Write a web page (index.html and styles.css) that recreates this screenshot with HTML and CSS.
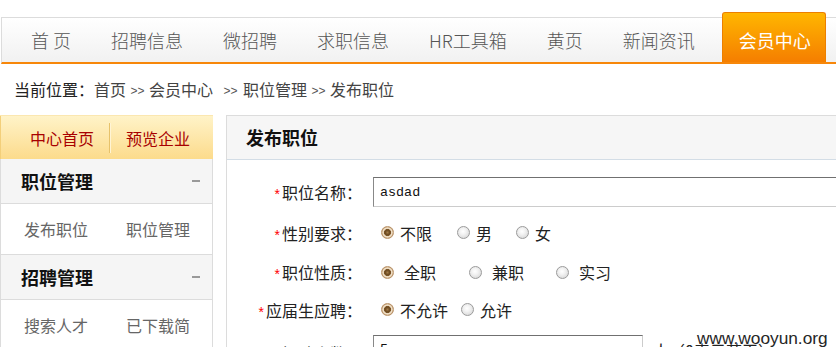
FILE: index.html
```html
<!DOCTYPE html>
<html lang="zh-CN">
<head>
<meta charset="utf-8">
<title>发布职位 - 会员中心</title>
<link rel="stylesheet" href="styles.css">
</head>
<body>
<nav class="nav">
  <a class="nav-item">首 页</a>
  <a class="nav-item">招聘信息</a>
  <a class="nav-item">微招聘</a>
  <a class="nav-item">求职信息</a>
  <a class="nav-item">HR工具箱</a>
  <a class="nav-item">黄页</a>
  <a class="nav-item">新闻资讯</a>
  <a class="nav-item active">会员中心</a>
</nav>

<div class="crumb"><span class="here">当前位置：</span>首页<span class="sep">&gt;&gt;</span>会员中心<span class="sep wide">&gt;&gt;</span>职位管理<span class="sep">&gt;&gt;</span>发布职位</div>

<div class="content">
  <aside class="side">
    <div class="side-tabs">
      <a class="st first">中心首页</a>
      <span class="st-sep"></span>
      <a class="st second">预览企业</a>
    </div>
    <div class="side-box">
      <div class="sec-h"><span>职位管理</span><i class="dash"></i></div>
      <div class="sec-row"><a class="cell">发布职位</a><a class="cell narrow">职位管理</a></div>
      <div class="sec-h"><span>招聘管理</span><i class="dash"></i></div>
      <div class="sec-row"><a class="cell">搜索人才</a><a class="cell narrow">已下载简历</a></div>
    </div>
  </aside>

  <main class="panel">
    <div class="panel-h">发布职位</div>
    <form class="form">
      <div class="row r1">
        <div class="lbl"><em>*</em>职位名称：</div>
        <div class="field"><input class="txt" type="text" value="asdad"></div>
      </div>
      <div class="row r2">
        <div class="lbl"><em>*</em>性别要求：</div>
        <div class="field radios sex">
          <label class="opt"><i class="radio on"></i>不限</label>
          <label class="opt"><i class="radio"></i>男</label>
          <label class="opt"><i class="radio"></i>女</label>
        </div>
      </div>
      <div class="row r3">
        <div class="lbl"><em>*</em>职位性质：</div>
        <div class="field radios kind">
          <label class="opt"><i class="radio on"></i>全职</label>
          <label class="opt"><i class="radio"></i>兼职</label>
          <label class="opt"><i class="radio"></i>实习</label>
        </div>
      </div>
      <div class="row r4">
        <div class="lbl"><em>*</em>应届生应聘：</div>
        <div class="field radios grad">
          <label class="opt"><i class="radio on"></i>不允许</label>
          <label class="opt"><i class="radio"></i>允许</label>
        </div>
      </div>
      <div class="row r5">
        <div class="lbl"><em>*</em>招聘人数：</div>
        <div class="field"><input class="txt short" type="text" value="5"><span class="unit">人（0表示若干）</span></div>
      </div>
    </form>
  </main>
</div>

<div class="wm">www.wooyun.org</div>
</body>
</html>
```

FILE: styles.css
```css
html, body {
  margin: 0;
  padding: 0;
  overflow: hidden;
  background: #fff;
}

body {
  position: relative;
  width: 836px;
  height: 347px;
  font-family: "Noto Sans CJK SC", "Noto Sans", sans-serif;
  color: #333;
}

a { text-decoration: none; cursor: pointer; }

/* ---------- top navigation ---------- */
.nav {
  display: flex;
  height: 44px;
  margin: 17px 0 0 1px;
  padding-left: 9px;
  border: 1px solid #dcdcdc;
  border-right: none;
  border-bottom: 2px solid #f7870a;
  background: linear-gradient(#ffffff, #f1f1f1);
}

.nav-item {
  padding: 0 20px;
  font-size: 18px;
  font-weight: 300;
  line-height: 44px;
  color: #555;
  white-space: nowrap;
}

.nav-item.active {
  height: 44px;
  margin: -6px 0 0 7px;
  padding: 5px 14px 0 16px;
  border: 1px solid #ec7f00;
  border-bottom: none;
  border-radius: 3px 3px 0 0;
  background: linear-gradient(#ffb600, #f57e00);
  color: #fff;
  font-weight: 400;
}

/* ---------- breadcrumb ---------- */
.crumb {
  height: 51px;
  padding-left: 14px;
  font-size: 16px;
  line-height: 51px;
  color: #444;
  white-space: nowrap;
}

.crumb .here { color: #222; }

.crumb .sep {
  display: inline-block;
  width: 23px;
  text-align: center;
  font-size: 12px;
  font-family: "Liberation Sans", sans-serif;
  color: #555;
  vertical-align: 1px;
}

.crumb .sep.wide {
  width: 30px;
  text-indent: 5px;
}

/* ---------- content ---------- */
.content {
  display: flex;
  gap: 13px;
  align-items: flex-start;
}

/* sidebar */
.side {
  flex: none;
  width: 213px;
}

.side-tabs {
  display: flex;
  align-items: center;
  height: 44px;
  border-top: 1px solid #fbe7b0;
  box-sizing: border-box;
  background: linear-gradient(#fff3c8, #fcdb8c);
  box-shadow: inset 1px 0 0 #f3cf7a;
}

.st {
  font-size: 16px;
  color: #a80000;
  white-space: nowrap;
}

.st.first { padding: 0 15px 0 30px; }
.st.second { padding-left: 16px; }

.st-sep {
  width: 1px;
  height: 30px;
  background: #e7c26a;
  box-shadow: 1px 0 0 #fff4d4;
}

.side-box {
  border: 1px solid #dcdcdc;
  border-top: none;
}

.sec-h {
  display: flex;
  align-items: center;
  justify-content: space-between;
  height: 44px;
  padding: 0 12px 0 20px;
  background: #f5f5f5;
  border-bottom: 1px solid #dcdcdc;
  font-size: 18px;
  font-weight: bold;
  color: #111;
}

.dash {
  width: 8px;
  height: 2px;
  background: #999;
}

.sec-row {
  display: flex;
  align-items: center;
  height: 50px;
  padding-left: 23px;
  border-bottom: 1px solid #dcdcdc;
  background: #fff;
}

.cell {
  width: 102px;
  font-size: 16px;
  color: #666;
  white-space: nowrap;
}

.cell.narrow {
  width: 64px;
  overflow: hidden;
}

/* main panel */
.panel {
  flex: none;
  width: 700px;
  height: 260px;
  border: 1px solid #dcdcdc;
  background: #fff;
}

.panel-h {
  height: 43px;
  padding-left: 19px;
  background: #f6f6f6;
  border-bottom: 1px solid #d3dde6;
  font-size: 18px;
  font-weight: bold;
  line-height: 43px;
  color: #111;
}

.form {
  margin: 0;
  padding-top: 12px;
}

.row {
  display: flex;
  align-items: center;
}

.r1 { height: 40px; }
.r2 { height: 41px; }
.r3 { height: 38px; }
.r4 { height: 37px; }
.r5 { height: 40px; align-items: flex-start; padding-top: 6px; }

.lbl {
  flex: none;
  width: 135px;
  text-align: right;
  font-size: 16px;
  color: #222;
  white-space: nowrap;
}

.r5 .lbl { padding-top: 7px; }

.lbl em {
  font-style: normal;
  font-size: 14px;
  color: #f00;
  margin-right: 2px;
  font-family: "Liberation Sans", sans-serif;
}

.field {
  margin-left: 11px;
  font-size: 16px;
  color: #222;
  white-space: nowrap;
}

.txt {
  width: 480px;
  height: 28px;
  margin: 0;
  padding: 0 6px;
  border: 1px solid #ccc;
  border-top-color: #707070;
  border-left-color: #888;
  font-family: "Liberation Mono", monospace;
  font-size: 13.4px;
  color: #111;
  outline: none;
  box-sizing: content-box;
}

.txt.short { width: 256px; }

.unit {
  position: relative;
  top: 4px;
  margin-left: 10px;
  font-size: 16px;
  color: #222;
}

/* radios */
.radios {
  display: flex;
  align-items: center;
  padding-left: 8px;
}

.opt {
  display: flex;
  align-items: center;
}

.radio {
  flex: none;
  width: 11px;
  height: 11px;
  margin-right: 6px;
  border-radius: 50%;
  border: 1px solid #9b9b9b;
  background: radial-gradient(circle at 45% 40%, #ffffff 0, #f2f2f2 35%, #cfcfcf 100%);
}

.radio.on {
  border-color: #b9936a;
  background: radial-gradient(circle at 50% 50%, #a27a48 0, #6e4c22 2.2px, #7a5428 3.2px, #e7d3b5 3.8px, #f2e6d2 4.6px, #caa57a 5.5px);
}

.sex .opt:first-child { margin-right: 25px; }
.sex .opt:nth-child(2) { margin-right: 24px; }

.kind .radio { margin-right: 10px; }
.kind .opt:first-child { margin-right: 33px; }
.kind .opt:nth-child(2) { margin-right: 32px; }

.grad .opt:first-child { margin-right: 13px; }

/* watermark */
.wm {
  position: absolute;
  left: 697px;
  top: 330px;
  font-family: "Liberation Sans", Arial, sans-serif;
  font-size: 17.3px;
  line-height: 17px;
  color: #262626;
  text-shadow: 0 0 1px #fff, 0 0 1px #fff;
  white-space: nowrap;
}
```
